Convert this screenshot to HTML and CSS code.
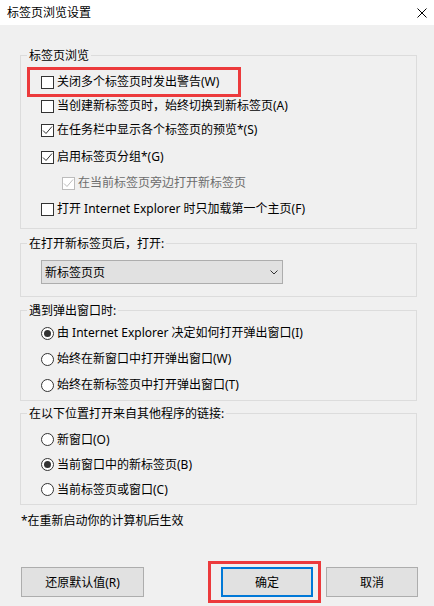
FILE: index.html
```html
<!DOCTYPE HTML>
<html>
<head>
<meta charset="utf-8">
<title>标签页浏览设置</title>
<link rel="stylesheet" href="styles.css">
</head>
<body>
<div class="titlebar">
  <span class="title">标签页浏览设置</span>
  <svg class="close" width="10" height="10" viewBox="0 0 10 10"><path d="M0.5 0.5 L9.5 9.5 M9.5 0.5 L0.5 9.5" stroke="#000" stroke-width="1" fill="none"/></svg>
</div>

<div class="content">
  <fieldset class="group tabs">
    <legend>标签页浏览</legend>
    <div class="row marked"><span class="box"></span>关闭多个标签页时发出警告(W)</div>
    <div class="row"><span class="box"></span>当创建新标签页时，始终切换到新标签页(A)</div>
    <div class="row"><span class="box"><svg width="11" height="11" viewBox="0 0 11 11"><polyline points="1,5.5 4,8.5 10,1.5" stroke="#333" stroke-width="1" fill="none"/></svg></span>在任务栏中显示各个标签页的预览*(S)</div>
    <div class="row gap3"><span class="box"><svg width="11" height="11" viewBox="0 0 11 11"><polyline points="1,5.5 4,8.5 10,1.5" stroke="#333" stroke-width="1" fill="none"/></svg></span>启用标签页分组*(G)</div>
    <div class="row gap2 sub disabled"><span class="box"><svg width="11" height="11" viewBox="0 0 11 11"><polyline points="1,5.5 4,8.5 10,1.5" stroke="#bcbcbc" stroke-width="1" fill="none"/></svg></span>在当前标签页旁边打开新标签页</div>
    <div class="row gap2"><span class="box"></span>打开 Internet Explorer 时只加载第一个主页(F)</div>
  </fieldset>

  <fieldset class="group newtab">
    <legend>在打开新标签页后，打开:</legend>
    <div class="combo">
      <span>新标签页页</span>
      <svg width="8" height="5" viewBox="0 0 8 5"><polyline points="0.5,0.5 4,4 7.5,0.5" stroke="#333" stroke-width="1" fill="none"/></svg>
    </div>
  </fieldset>

  <fieldset class="group popups">
    <legend>遇到弹出窗口时:</legend>
    <div class="row tall"><span class="radio on"></span>由 Internet Explorer 决定如何打开弹出窗口(I)</div>
    <div class="row tall"><span class="radio"></span>始终在新窗口中打开弹出窗口(W)</div>
    <div class="row tall"><span class="radio"></span>始终在新标签页中打开弹出窗口(T)</div>
  </fieldset>

  <fieldset class="group links">
    <legend>在以下位置打开来自其他程序的链接:</legend>
    <div class="row mid"><span class="radio"></span>新窗口(O)</div>
    <div class="row mid"><span class="radio on"></span>当前窗口中的新标签页(B)</div>
    <div class="row mid"><span class="radio"></span>当前标签页或窗口(C)</div>
  </fieldset>

  <p class="note">*在重新启动你的计算机后生效</p>
</div>

<div class="buttons">
  <button class="btn reset">还原默认值(R)</button>
  <span class="marked-btn"><button class="btn ok">确定</button></span>
  <button class="btn cancel">取消</button>
</div>
</body>
</html>
```

FILE: styles.css
```css
body {
  margin:0;
  width:434px;
  height:606px;
  background:#f0f0f0;
  font-family:"Noto Sans", "Noto Sans CJK SC", sans-serif;
  font-size:12px;
  color:#000;
  overflow:hidden;
}
.titlebar {
  height:25px;
  background:#fff;
  display:flex;
  align-items:center;
  justify-content:space-between;
  padding:0 7px;
}
.title { line-height:25px; }

.content { padding:0 17px 0 20px; }

.group {
  margin:0;
  padding:0;
  border:1px solid #dcdcdc;
  min-width:0;
}
.group legend {
  margin-left:6px;
  padding:0 2px;
  line-height:17px;
}
.tabs { margin-top:22px; padding:6px 0 7px; }
.newtab { margin-top:6px; padding:8px 0 12px; }
.popups { margin-top:5px; padding:1px 0 2px; }
.links { margin-top:4px; padding:5px 0 2px; }

.row {
  display:flex;
  align-items:center;
  height:24px;
  line-height:16px;
  margin-left:20px;
  white-space:nowrap;
}
.row.tall { height:26px; }
.row.mid { height:25px; }
.row.gap3 { margin-top:3px; }
.row.gap2 { margin-top:2px; }
.row.sub { margin-left:41px; }
.row.disabled { color:#6d6d6d; }
.row.marked {
  margin-left:9px;
  padding-left:11px;
  width:197px;
  outline:3px solid #ec3a3c;
}

.box {
  width:13px;
  height:13px;
  box-sizing:border-box;
  border:1px solid #333;
  background:#fff;
  margin-right:3px;
  flex:none;
  display:flex;
  align-items:center;
  justify-content:center;
}
.disabled .box { border-color:#bcbcbc; }
.box svg { display:block; }

.radio {
  width:13px;
  height:13px;
  box-sizing:border-box;
  border:1px solid #333;
  border-radius:50%;
  background:#fff;
  margin-right:3px;
  flex:none;
  display:flex;
  align-items:center;
  justify-content:center;
}
.radio.on::after {
  content:"";
  width:7px;
  height:7px;
  border-radius:50%;
  background:#333;
}

.combo {
  margin-left:20px;
  width:242px;
  height:24px;
  box-sizing:border-box;
  border:1px solid #adadad;
  background:#e1e1e1;
  display:flex;
  align-items:center;
  justify-content:space-between;
  padding:0 4px 0 3px;
}
.combo svg { display:block; }

.note {
  margin:8px 0 0 1px;
  line-height:16px;
}

.buttons {
  margin-top:32px;
  display:flex;
  align-items:center;
  padding:0 16px 0 21px;
}
.btn {
  height:30px;
  box-sizing:border-box;
  border:1px solid #adadad;
  background:#e1e1e1;
  font-family:inherit;
  font-size:12px;
  color:#000;
  padding:0;
}
.reset { width:123px; }
.ok { width:92px; border:2px solid #0078d7; display:block; }
.cancel { width:92px; margin-left:5px; }
.marked-btn {
  margin-left:auto;
  border:3px solid #ec3a3c;
  padding:3px 5px 3px 10px;
}
```
